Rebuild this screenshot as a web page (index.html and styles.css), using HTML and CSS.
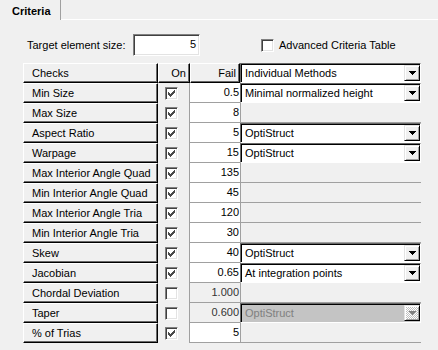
FILE: index.html
```html
<!DOCTYPE html>
<html lang="en">
  <head>
    <meta charset="UTF-8" />
    <title>Criteria</title>
    <link rel="stylesheet" href="styles.css">
  </head>
  <body>
    <div class="tabs">
      <div class="tab">Criteria</div>
      <div class="tab-rest"></div>
    </div>
    <div class="panel">
      <div class="top-row">
        <span class="size-label">Target element size:</span>
        <div class="textbox">5</div>
        <div class="advanced">
          <span class="checkbox"></span>
          <span>Advanced Criteria Table</span>
        </div>
      </div>

      <div class="grid">
        <!-- header -->
        <div class="name">Checks</div>
        <div class="head">On</div>
        <div class="head">Fail</div>
        <div class="combo"><span class="combo-text">Individual Methods</span><span class="drop"><svg width="7" height="4"><path d="M0 0h7v1h-7zM1 1h5v1h-5zM2 2h3v1h-3zM3 3h1v1h-1z" /></svg></span></div>

        <div class="name">Min Size</div>
        <div class="on"><span class="checkbox checked"><svg width="7" height="7"><path d="M0 2h1v3h-1zM1 3h1v3h-1zM2 4h1v3h-1zM3 3h1v3h-1zM4 2h1v3h-1zM5 1h1v3h-1zM6 0h1v3h-1z" /></svg></span></div>
        <div class="fail">0.5</div>
        <div class="combo"><span class="combo-text">Minimal normalized height</span><span class="drop"><svg width="7" height="4"><path d="M0 0h7v1h-7zM1 1h5v1h-5zM2 2h3v1h-3zM3 3h1v1h-1z" /></svg></span></div>

        <div class="name">Max Size</div>
        <div class="on"><span class="checkbox checked"><svg width="7" height="7"><path d="M0 2h1v3h-1zM1 3h1v3h-1zM2 4h1v3h-1zM3 3h1v3h-1zM4 2h1v3h-1zM5 1h1v3h-1zM6 0h1v3h-1z" /></svg></span></div>
        <div class="fail">8</div>
        <div class="method"></div>

        <div class="name">Aspect Ratio</div>
        <div class="on"><span class="checkbox checked"><svg width="7" height="7"><path d="M0 2h1v3h-1zM1 3h1v3h-1zM2 4h1v3h-1zM3 3h1v3h-1zM4 2h1v3h-1zM5 1h1v3h-1zM6 0h1v3h-1z" /></svg></span></div>
        <div class="fail">5</div>
        <div class="combo"><span class="combo-text">OptiStruct</span><span class="drop"><svg width="7" height="4"><path d="M0 0h7v1h-7zM1 1h5v1h-5zM2 2h3v1h-3zM3 3h1v1h-1z" /></svg></span></div>

        <div class="name">Warpage</div>
        <div class="on"><span class="checkbox checked"><svg width="7" height="7"><path d="M0 2h1v3h-1zM1 3h1v3h-1zM2 4h1v3h-1zM3 3h1v3h-1zM4 2h1v3h-1zM5 1h1v3h-1zM6 0h1v3h-1z" /></svg></span></div>
        <div class="fail">15</div>
        <div class="combo"><span class="combo-text">OptiStruct</span><span class="drop"><svg width="7" height="4"><path d="M0 0h7v1h-7zM1 1h5v1h-5zM2 2h3v1h-3zM3 3h1v1h-1z" /></svg></span></div>

        <div class="name">Max Interior Angle Quad</div>
        <div class="on"><span class="checkbox checked"><svg width="7" height="7"><path d="M0 2h1v3h-1zM1 3h1v3h-1zM2 4h1v3h-1zM3 3h1v3h-1zM4 2h1v3h-1zM5 1h1v3h-1zM6 0h1v3h-1z" /></svg></span></div>
        <div class="fail">135</div>
        <div class="method"></div>

        <div class="name">Min Interior Angle Quad</div>
        <div class="on"><span class="checkbox checked"><svg width="7" height="7"><path d="M0 2h1v3h-1zM1 3h1v3h-1zM2 4h1v3h-1zM3 3h1v3h-1zM4 2h1v3h-1zM5 1h1v3h-1zM6 0h1v3h-1z" /></svg></span></div>
        <div class="fail">45</div>
        <div class="method"></div>

        <div class="name">Max Interior Angle Tria</div>
        <div class="on"><span class="checkbox checked"><svg width="7" height="7"><path d="M0 2h1v3h-1zM1 3h1v3h-1zM2 4h1v3h-1zM3 3h1v3h-1zM4 2h1v3h-1zM5 1h1v3h-1zM6 0h1v3h-1z" /></svg></span></div>
        <div class="fail">120</div>
        <div class="method"></div>

        <div class="name">Min Interior Angle Tria</div>
        <div class="on"><span class="checkbox checked"><svg width="7" height="7"><path d="M0 2h1v3h-1zM1 3h1v3h-1zM2 4h1v3h-1zM3 3h1v3h-1zM4 2h1v3h-1zM5 1h1v3h-1zM6 0h1v3h-1z" /></svg></span></div>
        <div class="fail">30</div>
        <div class="method"></div>

        <div class="name">Skew</div>
        <div class="on"><span class="checkbox checked"><svg width="7" height="7"><path d="M0 2h1v3h-1zM1 3h1v3h-1zM2 4h1v3h-1zM3 3h1v3h-1zM4 2h1v3h-1zM5 1h1v3h-1zM6 0h1v3h-1z" /></svg></span></div>
        <div class="fail">40</div>
        <div class="combo"><span class="combo-text">OptiStruct</span><span class="drop"><svg width="7" height="4"><path d="M0 0h7v1h-7zM1 1h5v1h-5zM2 2h3v1h-3zM3 3h1v1h-1z" /></svg></span></div>

        <div class="name">Jacobian</div>
        <div class="on"><span class="checkbox checked"><svg width="7" height="7"><path d="M0 2h1v3h-1zM1 3h1v3h-1zM2 4h1v3h-1zM3 3h1v3h-1zM4 2h1v3h-1zM5 1h1v3h-1zM6 0h1v3h-1z" /></svg></span></div>
        <div class="fail">0.65</div>
        <div class="combo"><span class="combo-text">At integration points</span><span class="drop"><svg width="7" height="4"><path d="M0 0h7v1h-7zM1 1h5v1h-5zM2 2h3v1h-3zM3 3h1v1h-1z" /></svg></span></div>

        <div class="name">Chordal Deviation</div>
        <div class="on"><span class="checkbox"></span></div>
        <div class="fail disabled">1.000</div>
        <div class="method"></div>

        <div class="name">Taper</div>
        <div class="on"><span class="checkbox"></span></div>
        <div class="fail disabled">0.600</div>
        <div class="combo disabled"><span class="combo-text">OptiStruct</span><span class="drop"><svg width="7" height="4"><path d="M0 0h7v1h-7zM1 1h5v1h-5zM2 2h3v1h-3zM3 3h1v1h-1z" /></svg></span></div>

        <div class="name">% of Trias</div>
        <div class="on"><span class="checkbox checked"><svg width="7" height="7"><path d="M0 2h1v3h-1zM1 3h1v3h-1zM2 4h1v3h-1zM3 3h1v3h-1zM4 2h1v3h-1zM5 1h1v3h-1zM6 0h1v3h-1z" /></svg></span></div>
        <div class="fail">5</div>
        <div class="method"></div>
      </div>
    </div>
  </body>
</html>
```

FILE: styles.css
```css
/* Criteria panel */
body {
  margin: 0;
  font-family: "Liberation Sans", Arial, sans-serif;
  font-size: 11px;
  color: #000;
  background: #f0f0f0;
}

.tabs {
  display: flex;
  height: 20px;
}

.tab {
  width: 48px;
  height: 17px;
  padding: 3px 0 0 12px;
  line-height: 17px;
  font-weight: bold;
  border-right: 1px solid #a0a0a0;
}

.tab-rest {
  flex: 1;
  border-bottom: 1px solid #fff;
}

.panel {
  padding: 14px 0 0 23px;
}

.top-row {
  display: flex;
  align-items: center;
  height: 22px;
}

.size-label {
  margin-left: 4px;
  width: 106px;
}

.textbox {
  box-sizing: border-box;
  width: 67px;
  height: 22px;
  padding-right: 3px;
  line-height: 18px;
  text-align: right;
  background: #fff;
  border-top: 1px solid #808080;
  border-left: 1px solid #808080;
  border-right: 1px solid #fff;
  border-bottom: 1px solid #fff;
  box-shadow: inset 1px 1px #404040, inset -1px -1px #e3e3e3;
}

.advanced {
  display: flex;
  align-items: center;
  gap: 5px;
  margin-left: 61px;
}

.checkbox {
  box-sizing: border-box;
  display: block;
  width: 13px;
  height: 13px;
  padding: 2px;
  background: #fff;
  border-top: 1px solid #808080;
  border-left: 1px solid #808080;
  border-right: 1px solid #fff;
  border-bottom: 1px solid #fff;
  box-shadow: inset 1px 1px #404040, inset -1px -1px #e3e3e3;
}

.checkbox svg {
  display: block;
  fill: #4a4a4a;
}

/* grid */
.grid {
  display: grid;
  grid-template-columns: 135px 32px 50px 181px;
  grid-auto-rows: 20px;
  margin-top: 7px;
}

.name,
.head {
  box-sizing: border-box;
  line-height: 18px;
  background: #f0f0f0;
  border-top: 1px solid #fff;
  border-left: 1px solid #fff;
  border-right: 1px solid #000;
  border-bottom: 1px solid #000;
  box-shadow: inset -1px -1px #696969;
  white-space: nowrap;
}

.name {
  padding-left: 8px;
}

.head {
  padding-right: 3px;
  text-align: right;
}

.on {
  display: flex;
  align-items: center;
  padding-left: 7px;
  border-right: 1px solid #a0a0a0;
}

.fail {
  box-sizing: border-box;
  padding-right: 1px;
  line-height: 19px;
  text-align: right;
  background: #fff;
  border-bottom: 1px solid #a0a0a0;
}

.fail.disabled {
  background: #f0f0f0;
  color: #333;
}

.method {
  border-left: 1px solid #a0a0a0;
  border-bottom: 1px solid #a0a0a0;
}

.combo {
  box-sizing: border-box;
  display: flex;
  align-items: stretch;
  background: #fff;
  border-top: 1px solid #696969;
  border-left: 1px solid #696969;
  border-right: 1px solid #fff;
  border-bottom: 1px solid #fff;
  box-shadow: inset 1px 1px #000;
}

.combo-text {
  flex: 1;
  padding: 1px 0 0 4px;
  line-height: 16px;
  white-space: nowrap;
}

.drop {
  box-sizing: border-box;
  display: flex;
  align-items: center;
  justify-content: center;
  width: 16px;
  margin: 1px 0 1px 0;
  background: #f0f0f0;
  border-top: 1px solid #e3e3e3;
  border-left: 1px solid #e3e3e3;
  border-right: 1px solid #000;
  border-bottom: 1px solid #000;
  box-shadow: inset 1px 1px #fff, inset -1px -1px #a0a0a0;
}

.drop svg {
  display: block;
  fill: #000;
}

.combo.disabled {
  background: #c4c4c4;
  color: #808080;
}

.combo.disabled .drop {
  background: repeating-conic-gradient(#fff 0 25%, #c0c0c0 0 50%) 0 0 / 2px 2px;
}

.combo.disabled .drop svg {
  fill: #808080;
}
```
